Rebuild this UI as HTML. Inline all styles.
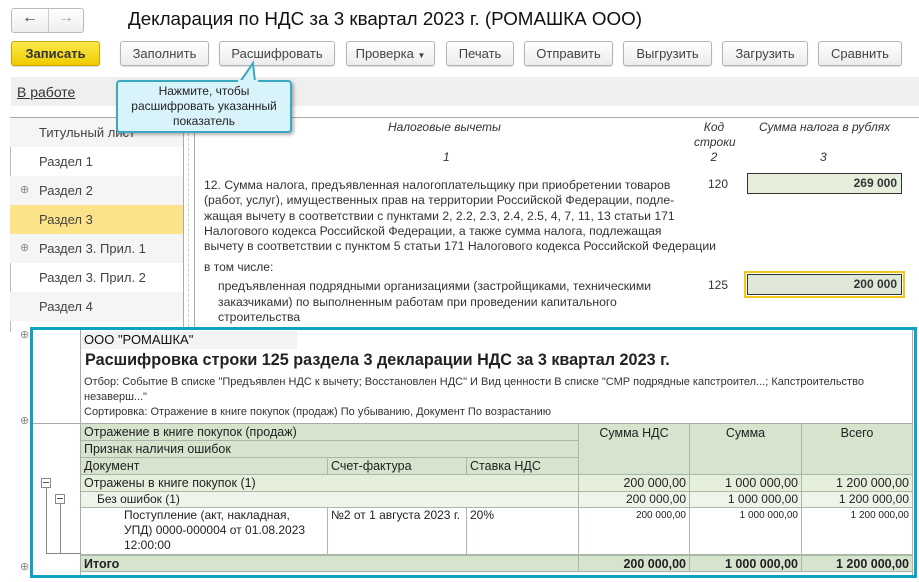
<!DOCTYPE html>
<html><head><meta charset="utf-8"><style>
*{margin:0;padding:0;box-sizing:border-box}
body{width:919px;height:582px;background:#fff;font-family:"Liberation Sans",Arial,sans-serif;color:#333;position:relative;overflow:hidden;font-size:12px}
.a{position:absolute;white-space:nowrap}
.btn{position:absolute;top:41px;height:25px;border:1px solid #b5b5b5;border-radius:3px;background:linear-gradient(#fff,#ececec);box-shadow:0 1px 1px rgba(0,0,0,.15);font-size:13px;color:#444;text-align:center;line-height:23px}
.nav{left:39px;width:143px;height:29px;font-size:13px;line-height:29px;position:absolute;color:#444}
.t{position:absolute;border-right:1px solid #a9b8a9;border-bottom:1px solid #a9b8a9;font-size:12.5px;line-height:16px;padding:0 3px;color:#222;overflow:hidden}
.hd{background:#d6e3cd}
.g1{background:#e5efdc}
.g2{background:#eef4ea}
.r{text-align:right}
</style></head><body>
<div class="a" style="left:11px;top:8px;width:73px;height:25px;border:1px solid #bbb;border-radius:3px;background:linear-gradient(#fff,#eee)"></div>
<div class="a" style="left:48px;top:9px;width:1px;height:23px;background:#ccc"></div>
<div class="a" style="left:22px;top:9px;font-size:16px;color:#444;font-weight:bold">&#x2190;</div>
<div class="a" style="left:58px;top:9px;font-size:16px;color:#aaa;font-weight:bold">&#x2192;</div>
<div class="a" style="left:128px;top:8px;font-size:18.8px;color:#111">Декларация по НДС за 3 квартал 2023 г. (РОМАШКА ООО)</div>
<div class="btn" style="left:11px;width:89px;background:linear-gradient(#fbe94b,#f0cc00);border-color:#c9a800;color:#333;font-weight:bold">Записать</div>
<div class="btn" style="left:120px;width:89px">Заполнить</div>
<div class="btn" style="left:219px;width:116px">Расшифровать</div>
<div class="btn" style="left:346px;width:89px">Проверка <span style="font-size:8px">&#9660;</span></div>
<div class="btn" style="left:446px;width:68px">Печать</div>
<div class="btn" style="left:524px;width:89px">Отправить</div>
<div class="btn" style="left:623px;width:89px">Выгрузить</div>
<div class="btn" style="left:722px;width:86px">Загрузить</div>
<div class="btn" style="left:818px;width:84px">Сравнить</div>
<div class="a" style="left:11px;top:77px;width:908px;height:29px;background:#efefef"></div>
<div class="a" style="left:17px;top:84px;font-size:14px;color:#333;text-decoration:underline">В работе</div>
<div class="a" style="left:10px;top:117px;width:909px;height:1px;background:#aaa"></div>
<div class="a" style="left:10px;top:117px;width:1px;height:215px;background:#bbb"></div>
<div class="a" style="left:10px;top:118px;width:173px;height:29px;background:#f5f5f5"></div>
<div class="a" style="left:10px;top:176px;width:173px;height:29px;background:#f5f5f5"></div>
<div class="a" style="left:10px;top:205px;width:173px;height:29px;background:#fce38a"></div>
<div class="a" style="left:10px;top:234px;width:173px;height:29px;background:#f5f5f5"></div>
<div class="a" style="left:10px;top:292px;width:173px;height:29px;background:#f5f5f5"></div>
<div class="nav" style="top:118px">Титульный лист</div>
<div class="nav" style="top:147px">Раздел 1</div>
<div class="nav" style="top:176px">Раздел 2</div>
<div class="nav" style="top:205px">Раздел 3</div>
<div class="nav" style="top:234px">Раздел 3. Прил. 1</div>
<div class="nav" style="top:263px">Раздел 3. Прил. 2</div>
<div class="nav" style="top:292px">Раздел 4</div>
<div class="a" style="left:20px;top:183px;font-size:11px;color:#888">&#8853;</div>
<div class="a" style="left:20px;top:241px;font-size:11px;color:#888">&#8853;</div>
<div class="a" style="left:20px;top:328px;font-size:11px;color:#888">&#8853;</div>
<div class="a" style="left:20px;top:414px;font-size:11px;color:#888">&#8853;</div>
<div class="a" style="left:20px;top:560px;font-size:11px;color:#888">&#8853;</div>
<div class="a" style="left:183px;top:118px;width:1px;height:460px;background:#aaa"></div>
<div class="a" style="left:188px;top:118px;width:0;height:460px;border-left:1px dashed #ccc"></div>
<div class="a" style="left:194px;top:118px;width:1px;height:460px;background:#aaa"></div>
<div class="a" style="left:388px;top:120px;font-style:italic;font-size:12px">Налоговые вычеты</div>
<div class="a" style="left:443px;top:150px;font-style:italic;font-size:12px">1</div>
<div class="a" style="left:694px;top:120px;font-style:italic;font-size:12px;text-align:center;width:40px;line-height:15px;white-space:normal">Код<br>строки<br>2</div>
<div class="a" style="left:759px;top:120px;font-style:italic;font-size:12px">Сумма налога в рублях</div>
<div class="a" style="left:820px;top:150px;font-style:italic;font-size:12px">3</div>
<div class="a" style="left:204px;top:178px;font-size:12.2px;line-height:15.3px;color:#333">12. Сумма налога, предъявленная налогоплательщику при приобретении товаров<br>(работ, услуг), имущественных прав на территории Российской Федерации, подле-<br>жащая вычету в соответствии с пунктами 2, 2.2, 2.3, 2.4, 2.5, 4, 7, 11, 13 статьи 171<br>Налогового кодекса Российской Федерации, а также сумма налога, подлежащая<br>вычету в соответствии с пунктом 5 статьи 171 Налогового кодекса Российской Федерации</div>
<div class="a" style="left:708px;top:177px;font-size:12px">120</div>
<div class="a" style="left:747px;top:173px;width:155px;height:21px;border:1px solid #333;background:#e5efdc;font-weight:bold;font-size:12px;text-align:right;padding-right:4px;line-height:19px">269 000</div>
<div class="a" style="left:204px;top:260px;font-size:12px">в том числе:</div>
<div class="a" style="left:218px;top:279px;font-size:12.2px;line-height:15.5px">предъявленная подрядными организациями (застройщиками, техническими<br>заказчиками) по выполненным работам при проведении капитального<br>строительства</div>
<div class="a" style="left:708px;top:278px;font-size:12px">125</div>
<div class="a" style="left:744px;top:271px;width:161px;height:27px;border:2px solid #f5c518"></div>
<div class="a" style="left:747px;top:274px;width:155px;height:21px;border:1px solid #333;background:#dfe7d8;font-weight:bold;font-size:12px;text-align:right;padding-right:4px;line-height:19px">200 000</div>
<div class="a" style="left:116px;top:80px;width:176px;height:53px;background:#d9f3fb;border:2px solid #3aa8c0;border-radius:4px;box-shadow:2px 2px 3px rgba(0,0,0,.3)"></div>
<svg class="a" style="left:235px;top:60px" width="30" height="24"><polygon points="5,22 18,3 20,22" fill="#d9f3fb" stroke="#3aa8c0" stroke-width="2"/><rect x="3" y="20" width="20" height="4" fill="#d9f3fb"/></svg>
<div class="a" style="left:116px;top:84px;width:176px;text-align:center;font-size:12px;line-height:15px;color:#222">Нажмите, чтобы<br>расшифровать указанный<br>показатель</div>
<div class="a" style="left:30px;top:327px;width:887px;height:251px;border:3px solid #0ea3c4;background:#fff"></div>
<div class="a" style="left:80px;top:330px;width:1px;height:245px;background:#aaa"></div>
<div class="a" style="left:33px;top:423px;width:880px;height:1px;background:#aaa"></div>
<div class="a" style="left:912px;top:330px;width:1px;height:245px;background:#aaa"></div>
<div class="a" style="left:81px;top:331px;width:216px;height:18px;background:#f3f3f3"></div>
<div class="a" style="left:84px;top:332px;font-size:13px;color:#111">ООО "РОМАШКА"</div>
<div class="a" style="left:85px;top:351px;font-size:16.2px;font-weight:bold;color:#222">Расшифровка строки 125 раздела 3 декларации НДС за 3 квартал 2023 г.</div>
<div class="a" style="left:84px;top:375px;font-size:11px;line-height:15px;color:#333">Отбор: Событие В списке "Предъявлен НДС к вычету; Восстановлен НДС" И Вид ценности В списке "СМР подрядные капстроител...; Капстроительство<br>незаверш..."</div>
<div class="a" style="left:84px;top:406px;font-size:11px;color:#333">Сортировка: Отражение в книге покупок (продаж) По убыванию, Документ По возрастанию</div>
<div class="t hd" style="left:81px;top:424px;width:498px;height:17px">Отражение в книге покупок (продаж)</div>
<div class="t hd" style="left:81px;top:441px;width:498px;height:17px">Признак наличия ошибок</div>
<div class="t hd" style="left:81px;top:458px;width:247px;height:17px">Документ</div>
<div class="t hd" style="left:328px;top:458px;width:139px;height:17px">Счет-фактура</div>
<div class="t hd" style="left:467px;top:458px;width:112px;height:17px">Ставка НДС</div>
<div class="t hd" style="left:579px;top:424px;width:111px;height:51px;text-align:center;padding-top:1px">Сумма НДС</div>
<div class="t hd" style="left:690px;top:424px;width:112px;height:51px;text-align:center;padding-top:1px">Сумма</div>
<div class="t hd" style="left:802px;top:424px;width:111px;height:51px;text-align:center;padding-top:1px">Всего</div>
<div class="t g1" style="left:81px;top:475px;width:498px;height:17px">Отражены в книге покупок (1)</div>
<div class="t g1 r" style="left:579px;top:475px;width:111px;height:17px">200 000,00</div>
<div class="t g1 r" style="left:690px;top:475px;width:112px;height:17px">1 000 000,00</div>
<div class="t g1 r" style="left:802px;top:475px;width:111px;height:17px">1 200 000,00</div>
<div class="t g2" style="left:81px;top:492px;width:498px;height:16px;padding-left:16px;font-size:12px;line-height:15px">Без ошибок (1)</div>
<div class="t g2 r" style="left:579px;top:492px;width:111px;height:16px;font-size:12px;line-height:15px">200 000,00</div>
<div class="t g2 r" style="left:690px;top:492px;width:112px;height:16px;font-size:12px;line-height:15px">1 000 000,00</div>
<div class="t g2 r" style="left:802px;top:492px;width:111px;height:16px;font-size:12px;line-height:15px">1 200 000,00</div>
<div class="t" style="left:81px;top:508px;width:247px;height:47px;padding-left:43px;padding-right:12px;font-size:12px;line-height:15px;white-space:normal">Поступление (акт, накладная, УПД) 0000-000004 от 01.08.2023 12:00:00</div>
<div class="t" style="left:328px;top:508px;width:139px;height:47px;font-size:12px;line-height:15px">№2 от 1 августа 2023 г.</div>
<div class="t" style="left:467px;top:508px;width:112px;height:47px;font-size:12px;line-height:15px">20%</div>
<div class="t r" style="left:579px;top:508px;width:111px;height:47px;font-size:10px;line-height:15px">200 000,00</div>
<div class="t r" style="left:690px;top:508px;width:112px;height:47px;font-size:10px;line-height:15px">1 000 000,00</div>
<div class="t r" style="left:802px;top:508px;width:111px;height:47px;font-size:10px;line-height:15px">1 200 000,00</div>
<div class="t hd" style="left:81px;top:555px;width:498px;height:17px;font-weight:bold;border-top:1px solid #a9b8a9">Итого</div>
<div class="t hd r" style="left:579px;top:555px;width:111px;height:17px;font-weight:bold;border-top:1px solid #a9b8a9">200 000,00</div>
<div class="t hd r" style="left:690px;top:555px;width:112px;height:17px;font-weight:bold;border-top:1px solid #a9b8a9">1 000 000,00</div>
<div class="t hd r" style="left:802px;top:555px;width:111px;height:17px;font-weight:bold;border-top:1px solid #a9b8a9">1 200 000,00</div>
<div class="a" style="left:41px;top:478px;width:10px;height:10px;border:1px solid #888;background:#fff"></div>
<div class="a" style="left:43px;top:482px;width:6px;height:1px;background:#555"></div>
<div class="a" style="left:55px;top:494px;width:10px;height:10px;border:1px solid #888;background:#fff"></div>
<div class="a" style="left:57px;top:498px;width:6px;height:1px;background:#555"></div>
<div class="a" style="left:46px;top:488px;width:1px;height:66px;background:#888"></div>
<div class="a" style="left:60px;top:504px;width:1px;height:50px;background:#888"></div>
<div class="a" style="left:46px;top:553px;width:35px;height:1px;background:#888"></div>
</body></html>
